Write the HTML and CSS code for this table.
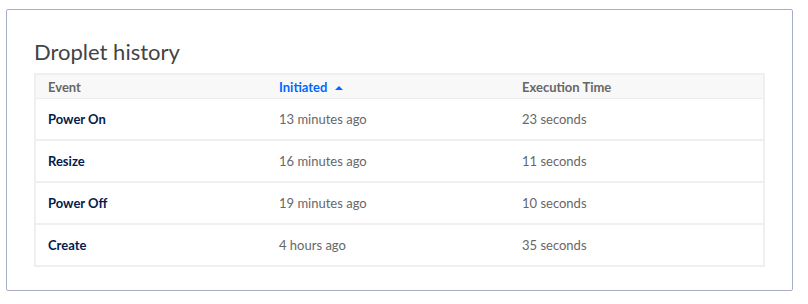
FILE: index.html
```html
<!DOCTYPE html>
<html lang="en">
<head>
    <meta charset="UTF-8">
    <meta name="viewport" content="width=device-width, initial-scale=1.0">
    <title>Droplet history</title>
    <link rel="stylesheet" href="styles.css">
</head>
<body>

<div class="panel">
    <h2 class="panel-title">Droplet history</h2>

    <table class="history">
        <thead>
            <tr>
                <th class="col-event">Event</th>
                <th class="col-init sorted">Initiated <span class="caret"></span></th>
                <th>Execution Time</th>
            </tr>
        </thead>
        <tbody>
            <tr>
                <td class="event">Power On</td>
                <td>13 minutes ago</td>
                <td>23 seconds</td>
            </tr>
            <tr>
                <td class="event">Resize</td>
                <td>16 minutes ago</td>
                <td>11 seconds</td>
            </tr>
            <tr>
                <td class="event">Power Off</td>
                <td>19 minutes ago</td>
                <td>10 seconds</td>
            </tr>
            <tr>
                <td class="event">Create</td>
                <td>4 hours ago</td>
                <td>35 seconds</td>
            </tr>
        </tbody>
    </table>
</div>

</body>
</html>
```

FILE: styles.css
```css
body {
    font-family: 'Lato', 'Liberation Sans', sans-serif;
    background-color: white;
    margin: 0;
    padding: 9px 15px 0 6px;
}

.panel {
    border: 1px solid #a9aec4;
    border-radius: 2px;
    padding: 27px 27px 23px 27px;
}

.panel-title {
    margin: 0 0 6px 0;
    font-size: 22px;
    font-weight: 400;
    color: #444;
    line-height: 30px;
}

.history {
    width: 100%;
    border-collapse: collapse;
    border: 2px solid #efefef;
    font-size: 13px;
}

.history th {
    background-color: #f8f8f8;
    color: #676767;
    font-weight: 700;
    text-align: left;
    height: 23px;
    padding: 0 12px;
    border-bottom: 1px solid #ececec;
}

.history .col-event {
    width: 207px;
}

.history .col-init {
    width: 219px;
}

.history th.sorted {
    color: #0069ff;
}

.caret {
    display: inline-block;
    width: 0;
    height: 0;
    margin-left: 4px;
    vertical-align: 2px;
    border-left: 4px solid transparent;
    border-right: 4px solid transparent;
    border-bottom: 4px solid #0069ff;
}

.history td {
    height: 40px;
    padding: 0 12px;
    color: #676767;
    border-top: 2px solid #efefef;
}

.history tbody tr:first-child td {
    border-top: none;
}

.history td.event {
    color: #031b4e;
    font-weight: 700;
}
```
